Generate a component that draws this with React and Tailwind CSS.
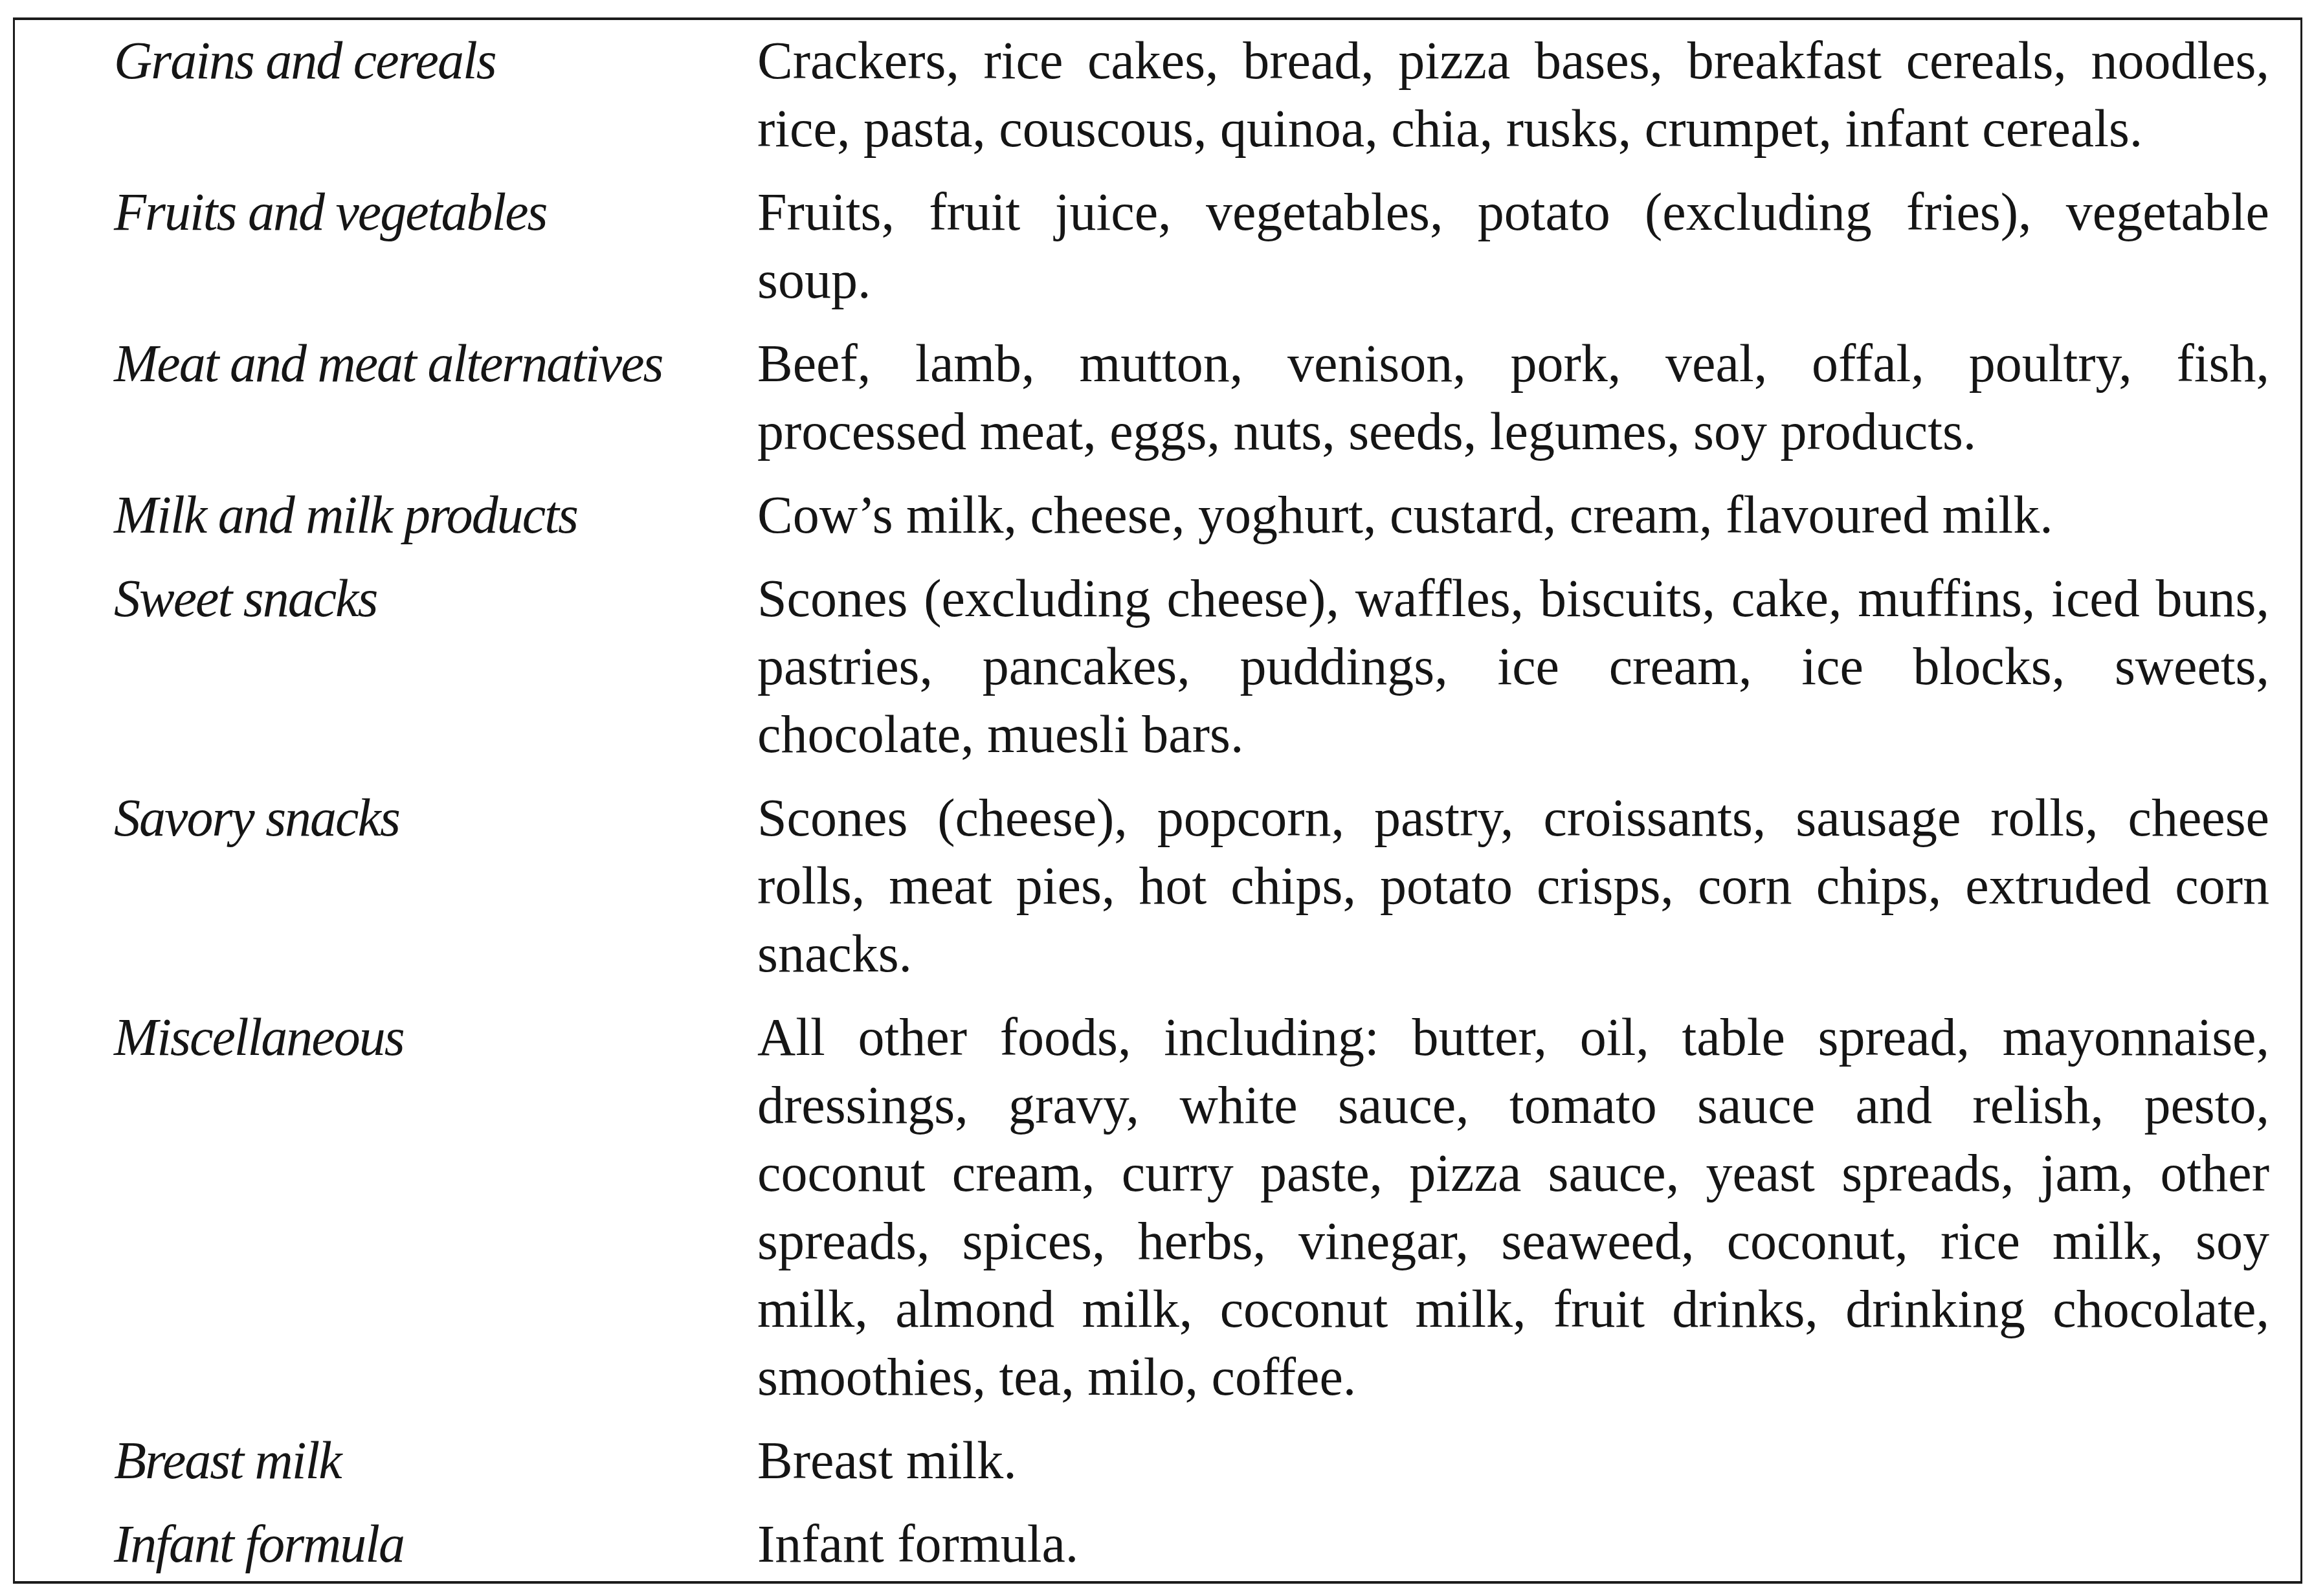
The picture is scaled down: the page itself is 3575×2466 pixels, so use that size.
import React from "react";

const rows = [
  {
    label: "Grains and cereals",
    lines: [
      "Crackers, rice cakes, bread, pizza bases, breakfast cereals, noodles,",
      "rice, pasta, couscous, quinoa, chia, rusks, crumpet, infant cereals.",
    ],
  },
  {
    label: "Fruits and vegetables",
    lines: [
      "Fruits, fruit juice, vegetables, potato (excluding fries), vegetable",
      "soup.",
    ],
  },
  {
    label: "Meat and meat alternatives",
    lines: [
      "Beef, lamb, mutton, venison, pork, veal, offal, poultry, fish,",
      "processed meat, eggs, nuts, seeds, legumes, soy products.",
    ],
  },
  {
    label: "Milk and milk products",
    lines: ["Cow\u2019s milk, cheese, yoghurt, custard, cream, flavoured milk."],
  },
  {
    label: "Sweet snacks",
    lines: [
      "Scones (excluding cheese), waffles, biscuits, cake, muffins, iced buns,",
      "pastries, pancakes, puddings, ice cream, ice blocks, sweets,",
      "chocolate, muesli bars.",
    ],
  },
  {
    label: "Savory snacks",
    lines: [
      "Scones (cheese), popcorn, pastry, croissants, sausage rolls, cheese",
      "rolls, meat pies, hot chips, potato crisps, corn chips, extruded corn",
      "snacks.",
    ],
  },
  {
    label: "Miscellaneous",
    lines: [
      "All other foods, including: butter, oil, table spread, mayonnaise,",
      "dressings, gravy, white sauce, tomato sauce and relish, pesto,",
      "coconut cream, curry paste, pizza sauce, yeast spreads, jam, other",
      "spreads, spices, herbs, vinegar, seaweed, coconut, rice milk, soy",
      "milk, almond milk, coconut milk, fruit drinks, drinking chocolate,",
      "smoothies, tea, milo, coffee.",
    ],
  },
  { label: "Breast milk", lines: ["Breast milk."] },
  { label: "Infant formula", lines: ["Infant formula."] },
];

export default function App() {
  return (
    <div className="w-[3575px] h-[2466px] bg-white pt-[27px] pl-[20px] text-[#151515] [font-family:'Liberation_Serif','Times_New_Roman',serif]">
      <div className="w-[3537px] border-x-[3px] border-y-[4px] border-[#1c1c1c] pt-[10px] pb-[5px] pl-[153px] pr-[48px] flex flex-col gap-[24px] text-[82px] leading-[105px]">
        {rows.map((row) => (
          <div key={row.label} className="grid grid-cols-[994px_2336px]">
            <div className="italic tracking-[-2px]">{row.label}</div>
            <div>
              {row.lines.map((line, i) => (
                <div
                  key={i}
                  className={
                    i < row.lines.length - 1
                      ? "text-justify [text-align-last:justify]"
                      : "text-left"
                  }
                >
                  {line}
                </div>
              ))}
            </div>
          </div>
        ))}
      </div>
    </div>
  );
}
